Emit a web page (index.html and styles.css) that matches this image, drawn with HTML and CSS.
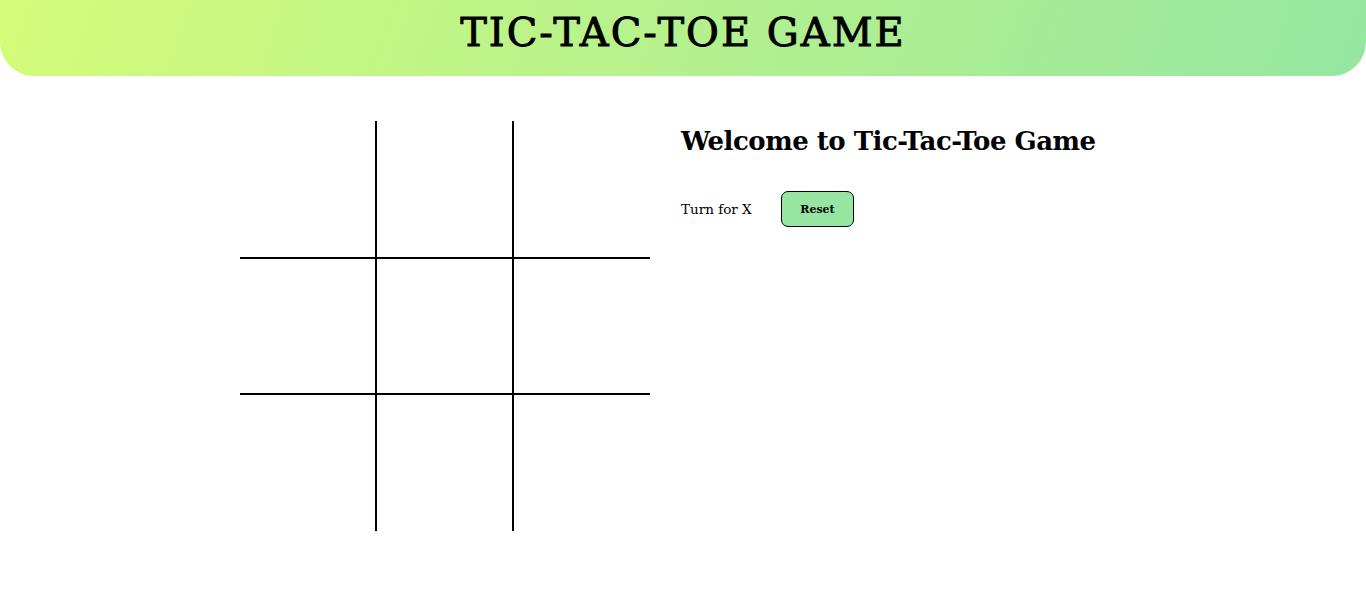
FILE: index.html
```html
<!DOCTYPE html>
<html lang="en">
<head>
<meta charset="utf-8">
<title>Tic-Tac-Toe Game</title>
<link rel="stylesheet" href="styles.css">
</head>
<body>
<header class="topbar">
  <h1 class="title">TIC-TAC-TOE GAME</h1>
</header>
<main class="game">
  <div class="board">
    <div class="cell"></div><div class="cell"></div><div class="cell"></div>
    <div class="cell"></div><div class="cell"></div><div class="cell"></div>
    <div class="cell"></div><div class="cell"></div><div class="cell"></div>
  </div>
  <section class="info">
    <h2 class="welcome">Welcome to Tic-Tac-Toe Game</h2>
    <div class="status">
      <span class="turn">Turn for X</span>
      <button class="reset">Reset</button>
    </div>
  </section>
</main>
</body>
</html>
```

FILE: styles.css
```css
* { box-sizing: border-box; }
body {
  margin: 0;
  font-family: "DejaVu Serif", "Liberation Serif", serif;
  color: #000;
  background: #fff;
}
.topbar {
  height: 76px;
  background: linear-gradient(110deg, #d4fc79 0%, #96e6a1 100%);
  border-radius: 0 0 34px 34px;
  display: flex;
  align-items: flex-start;
  justify-content: center;
  padding-top: 12px;
}
.title {
  margin: 0;
  font-size: 40px;
  font-weight: normal;
  letter-spacing: 2px;
  line-height: 40px;
  -webkit-text-stroke: 0.9px #000;
}
.game {
  display: flex;
  justify-content: center;
  gap: 31px;
  margin-top: 45px;
}
.board {
  width: 410px;
  height: 410px;
  display: grid;
  grid-template-columns: 137px 137px 136px;
  grid-template-rows: 138px 136px 136px;
}
.cell {
  border-right: 2px solid #000;
  border-bottom: 2px solid #000;
}
.cell:nth-child(3n) { border-right: none; }
.cell:nth-child(n+7) { border-bottom: none; }
.info {
  width: 445px;
}
.welcome {
  margin: 0;
  font-size: 26px;
  font-weight: 600;
  line-height: 40px;
  letter-spacing: -0.5px;
}
.status {
  display: flex;
  align-items: center;
  margin-top: 30px;
}
.turn {
  font-size: 13.5px;
  width: 100px;
}
.reset {
  width: 73px;
  height: 36px;
  background: #96e6a1;
  border: 1px solid #000;
  border-radius: 7px;
  font-family: "DejaVu Serif", serif;
  font-size: 11px;
  font-weight: bold;
  color: #000;
}
```
